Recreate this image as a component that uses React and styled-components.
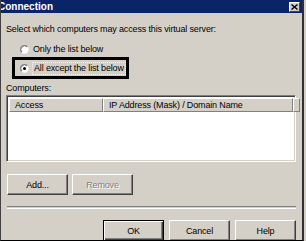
import React from 'react';
import styled, { createGlobalStyle } from 'styled-components';

const Global = createGlobalStyle`
  html, body { margin: 0; padding: 0; background: #d4d0c8; }
  body { width: 306px; height: 241px; overflow: hidden; font-family: "Liberation Sans", Arial, sans-serif; }
`;

const Window = styled.div`
  box-sizing: border-box;
  width: 304px;
  height: 241px;
  background: #d4d0c8;
  border-left: 1px solid #404040;
  border-right: 2px solid #303030;
  border-bottom: 1px solid #000;
  display: flex;
  flex-direction: column;
  overflow: hidden;
`;

const TitleBar = styled.div`
  height: 13px;
  flex: none;
  background: #0a246a;
  display: flex;
  align-items: center;
  justify-content: space-between;
  padding-right: 2px;
  border-bottom: 1px solid #d4d0c8;
  overflow: hidden;
`;

const Title = styled.span`
  color: #fff;
  font-weight: bold;
  font-size: 10px;
  line-height: 13px;
  margin-left: -3px;
  white-space: nowrap;
`;

const CloseBtn = styled.div`
  box-sizing: border-box;
  width: 11px;
  height: 10px;
  background: #d4d0c8;
  border: 1px solid;
  border-color: #fff #404040 #404040 #fff;
  display: flex;
  align-items: center;
  justify-content: center;
`;

const Content = styled.div`
  flex: 1;
  display: flex;
  flex-direction: column;
  padding: 0 6px 0 5px;
  font-size: 9px;
  letter-spacing: -0.15px;
  color: #000;
`;

const Label = styled.div`
  line-height: 12px;
  height: 12px;
  margin-top: ${p => p.$mt}px;
  white-space: nowrap;
`;

const RadioRow = styled.div`
  display: flex;
  align-items: center;
  gap: 4px;
  height: 12px;
  line-height: 12px;
  margin-top: 8px;
  padding-left: 14px;
  white-space: nowrap;
`;

const Highlight = styled.div`
  box-sizing: border-box;
  margin-top: 2px;
  margin-left: 6px;
  width: 117px;
  height: 22px;
  border: 3px solid #000;
  display: flex;
  align-items: center;
  gap: 3px;
  padding-left: 5px;
  white-space: nowrap;
`;

const Focus = styled.span`
  line-height: 11px;
  padding: 0 1px;
  border: 1px dotted #f4f2ee;
`;

const List = styled.div`
  box-sizing: border-box;
  margin-top: 1px;
  height: 67px;
  background: #fff;
  border: 1px solid;
  border-color: #808080 #fff #fff #808080;
  box-shadow: inset 1px 1px #404040, inset -1px -1px #d4d0c8;
  padding: 2px 2px;
`;

const Header = styled.div`
  display: flex;
  height: 14px;
`;

const HeaderCell = styled.div`
  box-sizing: border-box;
  width: ${p => p.$w}px;
  flex: ${p => (p.$w ? 'none' : '1')};
  height: 14px;
  background: #d4d0c8;
  border: 1px solid;
  border-color: #fff #808080 #808080 #fff;
  line-height: 12px;
  padding-left: 5px;
  white-space: nowrap;
  overflow: hidden;
`;

const ButtonRow = styled.div`
  display: flex;
  gap: ${p => p.$gap}px;
  justify-content: ${p => p.$end ? 'flex-end' : 'flex-start'};
  margin-top: ${p => p.$mt}px;
  padding-left: ${p => p.$pl || 0}px;
`;

const Button = styled.button`
  box-sizing: border-box;
  width: 61px;
  height: 21px;
  flex: none;
  padding: 0;
  background: #d4d0c8;
  border: 1px solid;
  border-color: ${p => p.$default ? '#000' : '#fff #404040 #404040 #fff'};
  box-shadow: ${p => p.$default
    ? 'inset 1px 1px #fff, inset -1px -1px #404040, inset -2px -2px #808080'
    : 'inset -1px -1px #808080'};
  font-family: "Liberation Sans", Arial, sans-serif;
  font-size: 9px;
  letter-spacing: -0.15px;
  color: ${p => p.disabled ? '#808080' : '#000'};
  text-shadow: ${p => p.disabled ? '1px 1px #fff' : 'none'};
`;

const Separator = styled.div`
  margin-top: 11px;
  margin-left: 1px;
  height: 1px;
  border-top: 1px solid #808080;
  border-bottom: 1px solid #fff;
`;

const Radio = ({ checked }) => (
  <svg width="9" height="9" viewBox="0 0 12 12" style={{ flex: 'none' }}>
    <circle cx="6" cy="6" r="5.5" fill="#fff" />
    <path d="M10.2 1.8 A5.5 5.5 0 0 0 1.8 10.2" fill="none" stroke="#808080" strokeWidth="1" />
    <path d="M9.4 2.6 A4.5 4.5 0 0 0 2.6 9.4" fill="none" stroke="#404040" strokeWidth="1" />
    {checked && <circle cx="6" cy="6" r="2" fill="#000" />}
  </svg>
);

export default function App() {
  return (
    <>
      <Global />
      <Window>
        <TitleBar>
          <Title>Connection</Title>
          <CloseBtn>
            <svg width="7" height="6" viewBox="0 0 7 6">
              <path d="M0.5 0.5 L6.5 5.5 M6.5 0.5 L0.5 5.5" stroke="#000" strokeWidth="1.4" />
            </svg>
          </CloseBtn>
        </TitleBar>
        <Content>
          <Label $mt={9}>Select which computers may access this virtual server:</Label>
          <RadioRow>
            <Radio />
            <span>Only the list below</span>
          </RadioRow>
          <Highlight>
            <Radio checked />
            <Focus>All except the list below</Focus>
          </Highlight>
          <Label $mt={3}>Computers:</Label>
          <List>
            <Header>
              <HeaderCell $w={94}>Access</HeaderCell>
              <HeaderCell $w={190}>IP Address (Mask) / Domain Name</HeaderCell>
              <HeaderCell />
            </Header>
          </List>
          <ButtonRow $gap={4} $mt={12} $pl={1}>
            <Button>Add...</Button>
            <Button disabled>Remove</Button>
          </ButtonRow>
          <Separator />
          <ButtonRow $gap={5} $mt={11} $end>
            <Button $default>OK</Button>
            <Button>Cancel</Button>
            <Button>Help</Button>
          </ButtonRow>
        </Content>
      </Window>
    </>
  );
}
